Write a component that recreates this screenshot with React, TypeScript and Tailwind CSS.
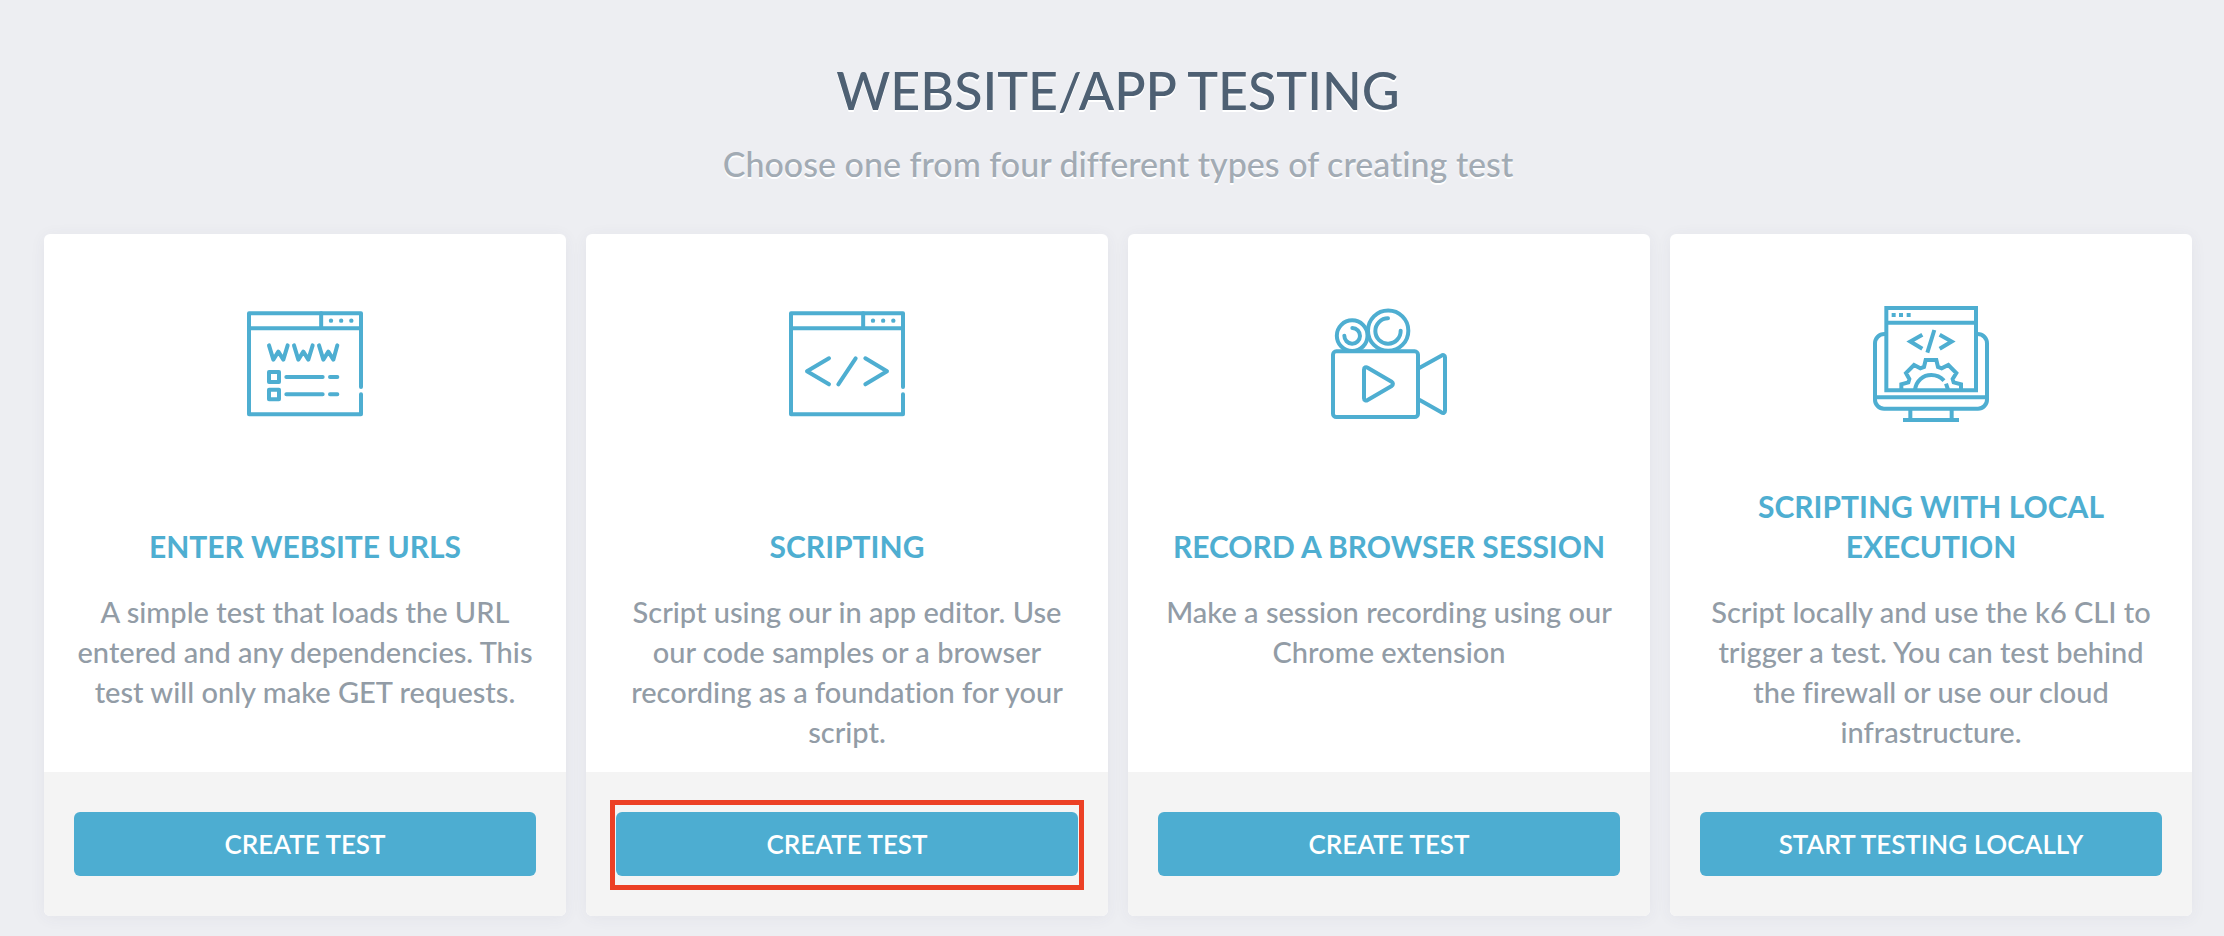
import type { ReactNode } from "react";

type IconProps = { viewBox: string; children: ReactNode };

function Icon({ viewBox, children }: IconProps) {
  return (
    <svg
      aria-hidden="true"
      className="size-[116px] text-[#4eaed1]"
      viewBox={viewBox}
      fill="none"
      stroke="currentColor"
      strokeWidth={12}
      strokeLinecap="round"
      strokeLinejoin="round"
    >
      {children}
    </svg>
  );
}

function WindowFrame() {
  return (
    <>
      <path d="M393 276V55H57V357.500H393V298" />
      <path d="M57 100H393M273.500 55V99" />
      <g fill="currentColor" stroke="none">
        <circle cx="303" cy="77" r="6.500" />
        <circle cx="333.500" cy="77" r="6.500" />
        <circle cx="364" cy="77" r="6.500" />
      </g>
    </>
  );
}

function UrlsIcon() {
  return (
    <Icon viewBox="51 33 348 348">
      <WindowFrame />
      <path d="M117 151L130 194L145 170L160 194L173 151M192 151L205 194L220 170L235 194L248 151M267 151L280 194L295 170L310 194L322 151" />
      <path d="M117 231H147V261H117ZM117 284H147V313H117Z" />
      <path d="M169 246H278M300 246H322M169 298H278M300 298H322" />
    </Icon>
  );
}

function ScriptingIcon() {
  return (
    <Icon viewBox="51 33 348 348">
      <WindowFrame />
      <path d="M171 190L105 229L171 268M251 190L199 268M280 190L345 229L280 268" />
    </Icon>
  );
}

function RecorderIcon() {
  return (
    <Icon viewBox="48 33 348 348">
      <rect x="54" y="169" width="255" height="197" rx="10" />
      <circle cx="111.500" cy="122" r="46" />
      <circle cx="219.500" cy="107" r="60.500" />
      <path d="M112 99A23.500 23.500 0 1 1 88 122" />
      <path d="M219 70A38 38 0 1 0 257 107" />
      <path d="M147 224V310C147 317 153 318 158 315L230 273C235 270 235 263 230 260L158 218C153 215 147 217 147 224Z" />
      <path d="M314 218L379 182C385 178 390 181 390 187V347C390 354 385 356 379 352L314 315" />
    </Icon>
  );
}

function LocalIcon() {
  return (
    <Icon viewBox="54 33 348 348">
      <g strokeLinecap="butt" strokeLinejoin="miter">
        <path d="M94 39H363V286H94ZM94 83H363" />
        <path d="M94 117H88A28 28 0 0 0 60 145V314A27 27 0 0 0 87 341H369A27 27 0 0 0 396 314V145A28 28 0 0 0 368 117H363" />
        <path d="M60 307H396M166 341V375M290 341V375M144 375H312" />
        <path d="M202 119L166 139.500L202 161M238 105L217 173M254 119L290 139.500L254 161" />
        <path d="M139 284V268L160 262L163 252L153 234L177 210L196 220L207 216L212 195H244L249 216L260 220L280 210L304 234L293 252L296 262L318 268V284" />
        <path d="M180 284C184 257 204 240 229 240C244 240 257 246 267 257M273 266L279 284" />
      </g>
      <path
        d="M110 54H122V66H110ZM132 54H144V66H132ZM155 54H167V66H155Z"
        fill="currentColor"
        stroke="none"
      />
    </Icon>
  );
}

type TestOption = {
  title: string;
  description: string;
  action: string;
  icon: ReactNode;
  highlighted?: boolean;
};

const options: TestOption[] = [
  {
    title: "ENTER WEBSITE URLS",
    description:
      "A simple test that loads the URL entered and any dependencies. This test will only make GET requests.",
    action: "CREATE TEST",
    icon: <UrlsIcon />,
  },
  {
    title: "SCRIPTING",
    description:
      "Script using our in app editor. Use our code samples or a browser recording as a foundation for your script.",
    action: "CREATE TEST",
    icon: <ScriptingIcon />,
    highlighted: true,
  },
  {
    title: "RECORD A BROWSER SESSION",
    description: "Make a session recording using our Chrome extension",
    action: "CREATE TEST",
    icon: <RecorderIcon />,
  },
  {
    title: "SCRIPTING WITH LOCAL EXECUTION",
    description:
      "Script locally and use the k6 CLI to trigger a test. You can test behind the firewall or use our cloud infrastructure.",
    action: "START TESTING LOCALLY",
    icon: <LocalIcon />,
  },
];

function OptionCard({ title, description, action, icon, highlighted }: TestOption) {
  return (
    <article className="flex flex-col rounded-md bg-white shadow-[0_2px_16px_rgba(60,70,110,0.06)]">
      <div className="flex grow flex-col items-center px-7 pt-[72px] pb-5 text-center">
        {icon}
        <div className="mt-16 flex min-h-20 items-end">
          <h2 className="text-[30px] leading-10 font-bold text-[#4eaed1]">{title}</h2>
        </div>
        <p className="mt-[26px] text-[29px] leading-10 font-medium text-[#929ca6]">{description}</p>
      </div>
      <div className="rounded-b-md bg-[#f4f4f4] px-[30px] py-10">
        <div className="relative">
          <button
            type="button"
            className="block h-16 w-full cursor-pointer rounded-md bg-[#4dadd1] text-[26px] font-semibold text-white"
          >
            {action}
          </button>
          {highlighted && (
            <div className="pointer-events-none absolute -inset-x-1.5 -top-3 -bottom-3.5 border-5 border-[#ec4025]" />
          )}
        </div>
      </div>
    </article>
  );
}

export default function App() {
  return (
    <main className="min-h-screen bg-[#edeef2] pt-[58px] pr-8 pb-5 pl-11 font-['Lato','Open_Sans',sans-serif] [font-variant-ligatures:none]">
      <header className="text-center [text-shadow:0_2px_0_#fff]">
        <h1 className="text-[52px] leading-16 font-medium text-[#4e6073]">WEBSITE/APP TESTING</h1>
        <p className="mt-[18px] text-[34px] leading-12 font-medium text-[#a2abb4]">
          Choose one from four different types of creating test
        </p>
      </header>
      <section className="mt-[46px] grid grid-cols-4 gap-5">
        {options.map((option) => (
          <OptionCard key={option.title} {...option} />
        ))}
      </section>
    </main>
  );
}
